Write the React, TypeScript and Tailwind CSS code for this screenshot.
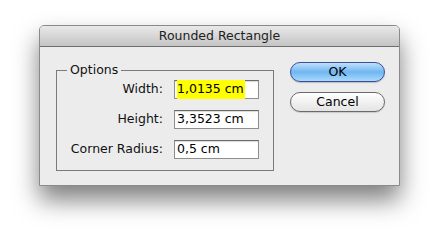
const font = { fontFamily: '"DejaVu Sans", "Liberation Sans", sans-serif' };

function Field({ label, value, selected }: { label: string; value: string; selected?: boolean }) {
  return (
    <div className="flex items-center h-[19px]">
      <div className="w-[117px] pr-[11px] text-right text-[12.5px] text-[#111] whitespace-nowrap">{label}</div>
      <div className="w-[85px] h-[19px] bg-white border border-[#8e8e8e] border-t-[#6a6a6a] shadow-[inset_0_1px_1px_rgba(0,0,0,0.15)] flex items-center pl-[2px] text-[12.5px] text-black">
        <span className={selected ? 'bg-[#ffff00] pr-[1px]' : ''}>{value}</span>
      </div>
    </div>
  );
}

export default function App() {
  return (
    <div className="w-[440px] h-[241px] bg-white overflow-hidden" style={font}>
      <div className="ml-[39px] mt-[25px] w-[361px] h-[161px] bg-[#ececec] border border-[#8a8a8a] rounded-t-[5px] shadow-[0_14px_24px_rgba(0,0,0,0.5)] flex flex-col">
        <div className="h-[21px] rounded-t-[4px] bg-gradient-to-b from-[#e9e9e9] to-[#c4c4c4] border-b border-[#6f6f6f] flex items-center justify-center text-[12.5px] text-[#222]">
          Rounded Rectangle
        </div>
        <div className="flex pl-[16px] pt-[16px]">
          <fieldset className="w-[218px] h-[108px] border border-[#7a7a7a]">
            <legend className="ml-[10px] px-[3px] text-[12.5px] text-[#111] leading-[14px]">Options</legend>
            <div className="flex flex-col gap-[11px] pt-[3px]">
              <Field label="Width:" value="1,0135 cm" selected />
              <Field label="Height:" value="3,3523 cm" />
              <Field label="Corner Radius:" value="0,5 cm" />
            </div>
          </fieldset>
          <div className="ml-[16px] mt-[-1px] flex flex-col gap-[10px]">
            <button className="w-[95px] h-[20px] rounded-full border border-[#3a4f9a] bg-gradient-to-b from-[#bfe0fb] via-[#6fb6f1] to-[#a9dafd] text-[12.5px] text-black leading-none shadow-[0_1px_1px_rgba(0,0,0,0.2)]">
              OK
            </button>
            <button className="w-[95px] h-[20px] rounded-full border border-[#6a6a6a] bg-gradient-to-b from-[#ffffff] via-[#f1f1f1] to-[#e4e4e4] text-[12.5px] text-black leading-none shadow-[0_1px_1px_rgba(0,0,0,0.15)]">
              Cancel
            </button>
          </div>
        </div>
      </div>
    </div>
  );
}
